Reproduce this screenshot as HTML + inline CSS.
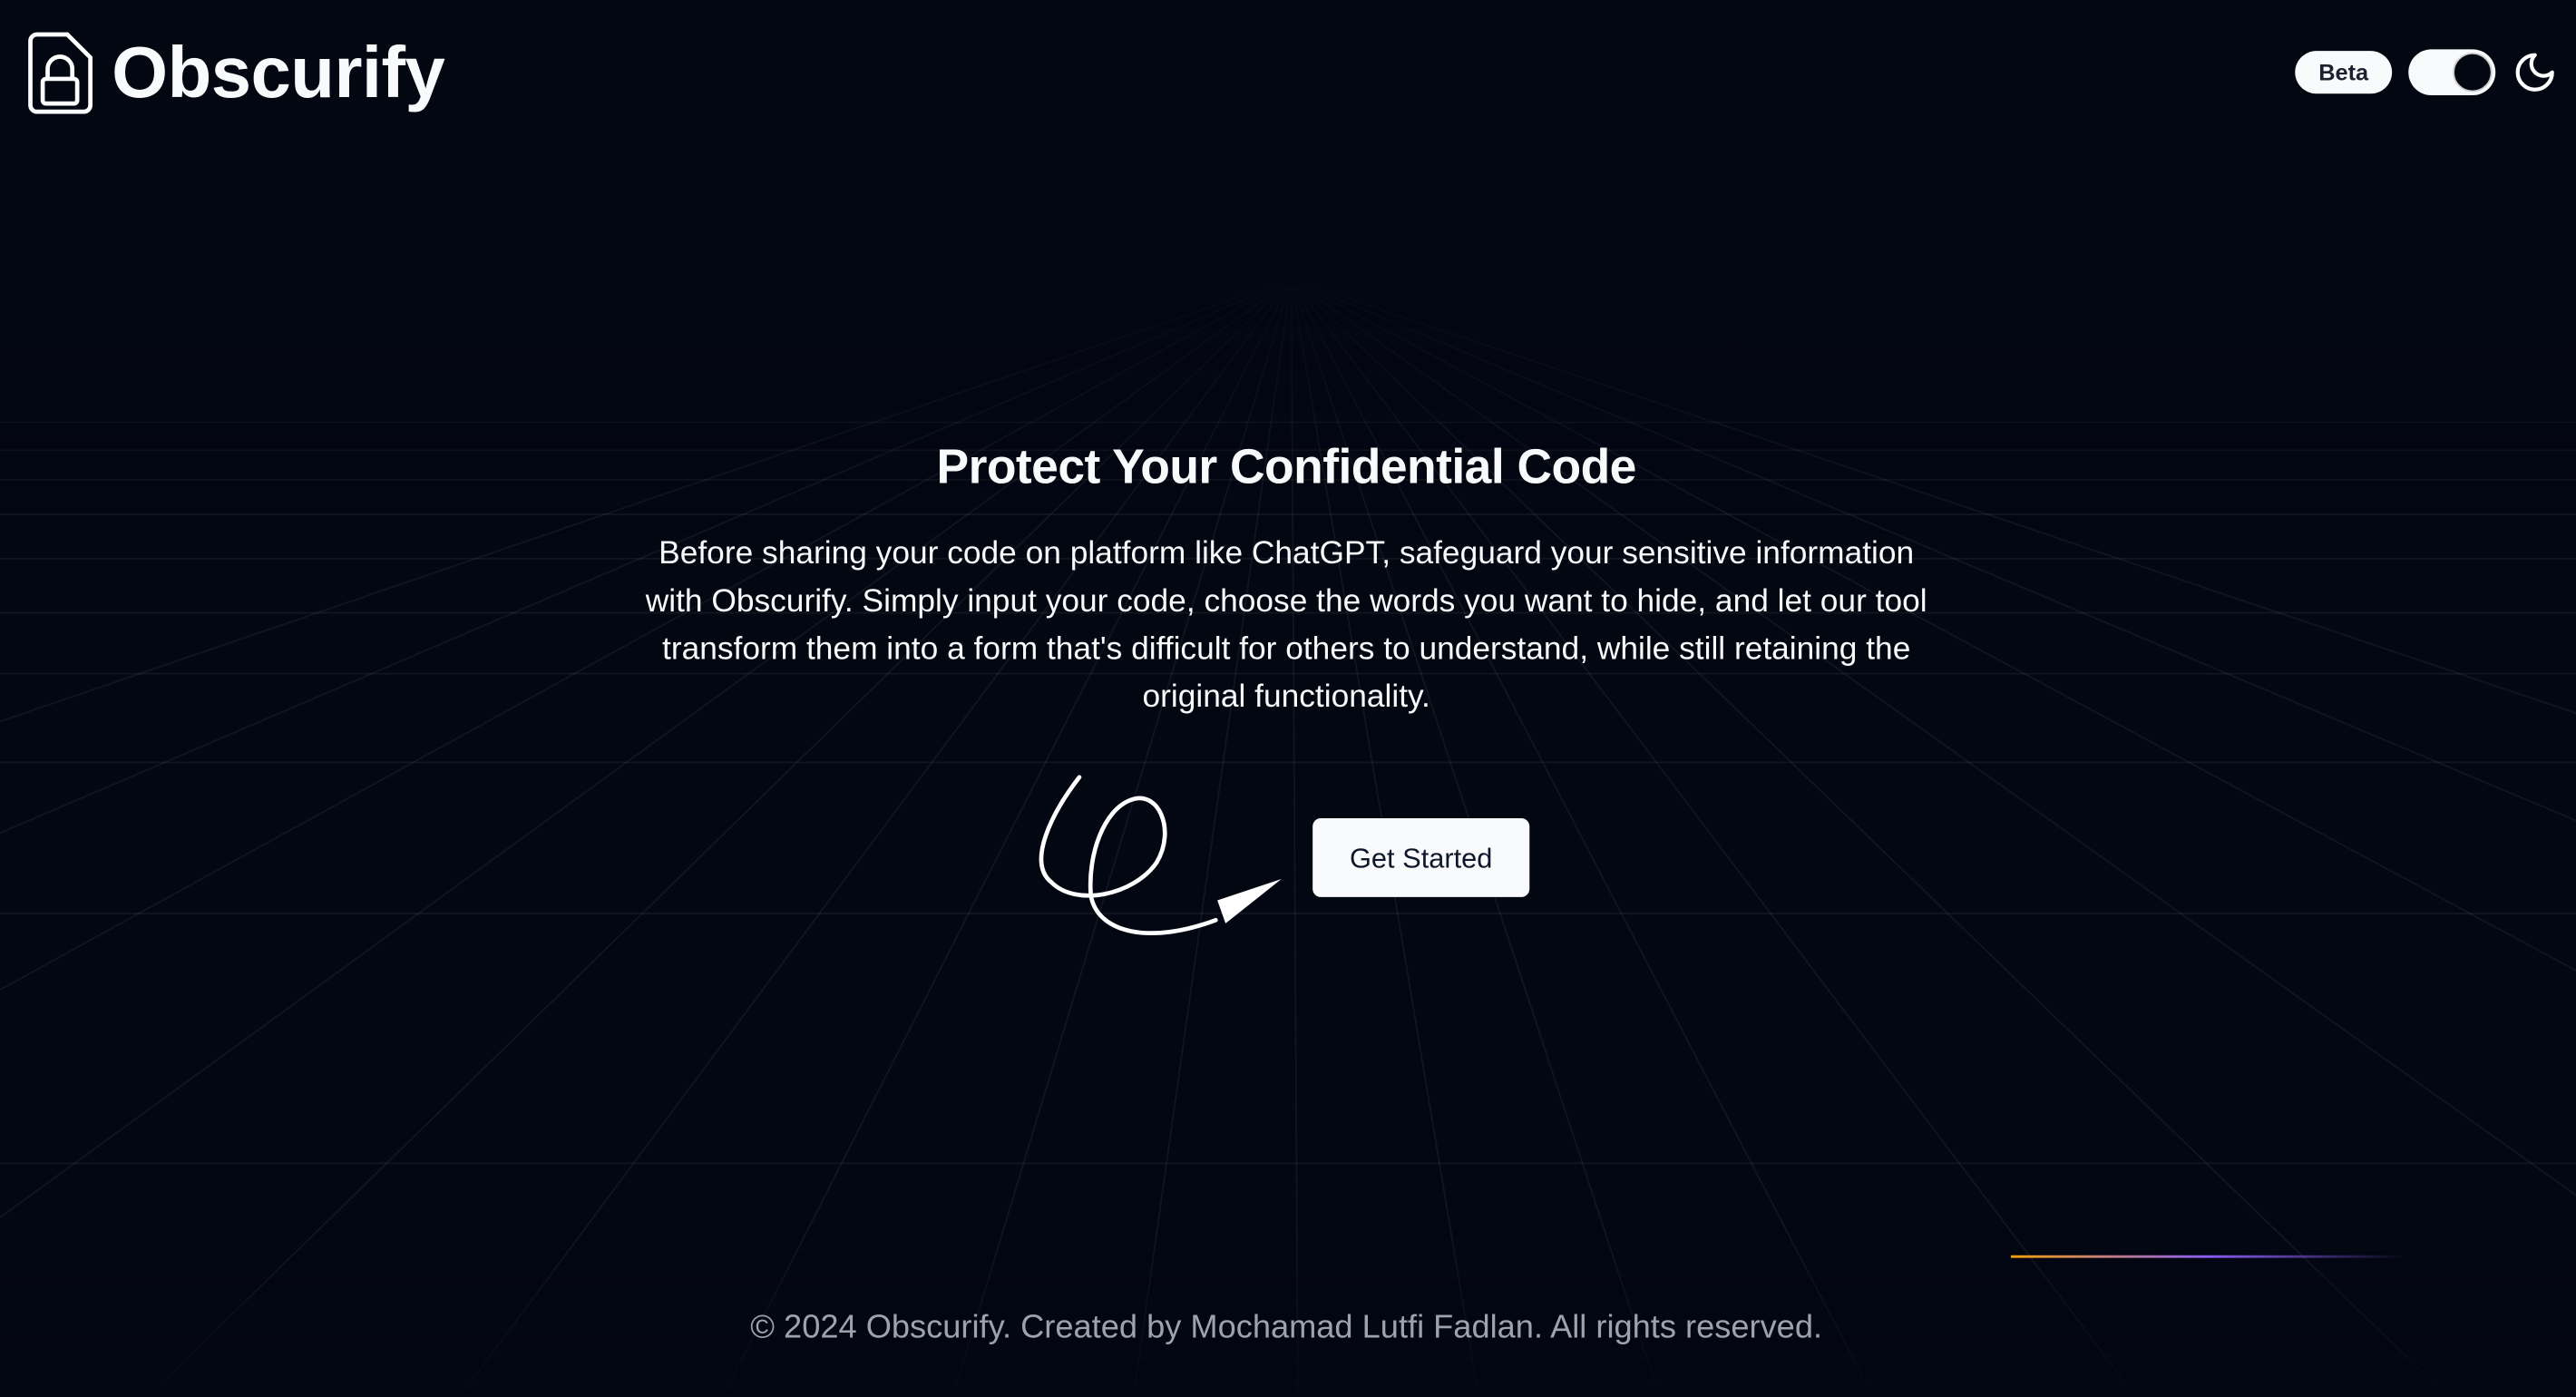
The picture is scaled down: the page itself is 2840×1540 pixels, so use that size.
<!DOCTYPE html>
<html><head><meta charset="utf-8"><style>
html,body{margin:0;padding:0;background:#030712;overflow:hidden;width:2840px;height:1540px}
#s{position:absolute;left:0;top:0;width:1568px;height:850px;transform:scale(1.81122);transform-origin:0 0;font-family:"Liberation Sans",sans-serif;color:#f8fafc}
.a{position:absolute}
</style></head><body><div id="s">
<svg class="a" style="left:0;top:0" width="1568" height="850">
<defs><linearGradient id="f" x1="0" y1="0" x2="0" y2="1"><stop offset="0" stop-color="#030712" stop-opacity="1"/><stop offset="0.25" stop-color="#030712" stop-opacity="0"/><stop offset="0.85" stop-color="#030712" stop-opacity="0"/><stop offset="1" stop-color="#030712" stop-opacity="0.9"/></linearGradient>
<linearGradient id="g" x1="0" x2="1"><stop offset="0" stop-color="#f59e0b"/><stop offset="0.5" stop-color="#8b5cf6"/><stop offset="1" stop-color="#8b5cf6" stop-opacity="0"/></linearGradient></defs>
<g stroke="rgba(255,255,255,0.06)" stroke-width="1">
<line x1="0" y1="257" x2="1568" y2="257"/><line x1="0" y1="274" x2="1568" y2="274"/><line x1="0" y1="292" x2="1568" y2="292"/><line x1="0" y1="313" x2="1568" y2="313"/><line x1="0" y1="340" x2="1568" y2="340"/><line x1="0" y1="373" x2="1568" y2="373"/><line x1="0" y1="410" x2="1568" y2="410"/><line x1="0" y1="464" x2="1568" y2="464"/><line x1="0" y1="556" x2="1568" y2="556"/><line x1="0" y1="708" x2="1568" y2="708"/>
<line x1="786" y1="170" x2="-1200" y2="850"/><line x1="786" y1="170" x2="-800" y2="850"/><line x1="786" y1="170" x2="-450" y2="850"/><line x1="786" y1="170" x2="-150" y2="850"/><line x1="786" y1="170" x2="90" y2="850"/><line x1="786" y1="170" x2="280" y2="850"/><line x1="786" y1="170" x2="440" y2="850"/><line x1="786" y1="170" x2="580" y2="850"/><line x1="786" y1="170" x2="690" y2="850"/><line x1="786" y1="170" x2="790" y2="850"/><line x1="786" y1="170" x2="900" y2="850"/><line x1="786" y1="170" x2="1010" y2="850"/><line x1="786" y1="170" x2="1140" y2="850"/><line x1="786" y1="170" x2="1300" y2="850"/><line x1="786" y1="170" x2="1490" y2="850"/><line x1="786" y1="170" x2="1740" y2="850"/><line x1="786" y1="170" x2="2050" y2="850"/><line x1="786" y1="170" x2="2400" y2="850"/><line x1="786" y1="170" x2="2800" y2="850"/>
</g>
<rect x="0" y="150" width="1568" height="700" fill="url(#f)"/>
<rect x="0" y="0" width="1568" height="175" fill="#030712"/>
<rect x="1224" y="764" width="240" height="1.6" fill="url(#g)"/>
<path d="M657 473 C640 495 625 525 640 537 C655 552 690 545 704 525 C716 505 705 480 688 487 C672 493 662 520 664 545 C668 568 700 575 740 560" fill="none" stroke="#fff" stroke-width="2.6" stroke-linecap="round"/>
<path d="M780 535 L741 548 L746 562 Z" fill="#fff"/>
</svg>
<svg class="a" style="left:17px;top:19px" width="42" height="51" viewBox="0 0 42 51" fill="none" stroke="#fff" stroke-width="2.6" stroke-linejoin="round">
<path d="M5 2 H24 L38 16 V45 A4 4 0 0 1 34 49 H5 A4 4 0 0 1 1.5 45 V6 A4 4 0 0 1 5 2 Z"/>
<rect x="9" y="29" width="21" height="15" rx="2"/><path d="M12 29 V23 A7.5 7.5 0 0 1 27 23 V29"/></svg>
<div class="a" style="left:68px;top:20px;font-size:44px;font-weight:700;letter-spacing:-0.3px">Obscurify</div>
<div class="a" style="left:1397px;top:31px;width:59px;height:26px;border-radius:13px;background:#f8fafc;color:#1e2030;font-size:14px;font-weight:700;line-height:26px;text-align:center">Beta</div>
<div class="a" style="left:1466px;top:30px;width:53px;height:28px;border-radius:14px;background:#f8fafc"><div class="a" style="left:27px;top:2px;width:22px;height:22px;border-radius:50%;background:#030712;border:1px solid #ccc"></div></div>
<svg class="a" style="left:1529px;top:30px" width="28" height="28" viewBox="0 0 24 24" fill="none" stroke="#fff" stroke-width="2" stroke-linecap="round" stroke-linejoin="round"><path d="M12 3a6 6 0 0 0 9 9 9 9 0 1 1-9-9Z"/></svg>
<div class="a" style="left:0;width:1566px;top:268px;text-align:center;font-size:29.5px;font-weight:700;letter-spacing:-0.3px">Protect Your Confidential Code</div>
<div class="a" style="left:382px;width:802px;top:323px;text-align:center;font-size:19.5px;line-height:29px">Before sharing your code on platform like ChatGPT, safeguard your sensitive information with Obscurify. Simply input your code, choose the words you want to hide, and let our tool transform them into a form that's difficult for others to understand, while still retaining the original functionality.</div>
<div class="a" style="left:799px;top:498px;width:132px;height:48px;border-radius:5px;background:#f8fafc;color:#0f172a;font-size:17px;line-height:49px;text-align:center">Get Started</div>
<div class="a" style="left:0;width:1566px;top:797px;text-align:center;font-size:20px;color:#9ca3af">© 2024 Obscurify. Created by Mochamad Lutfi Fadlan. All rights reserved.</div>
</div></body></html>
